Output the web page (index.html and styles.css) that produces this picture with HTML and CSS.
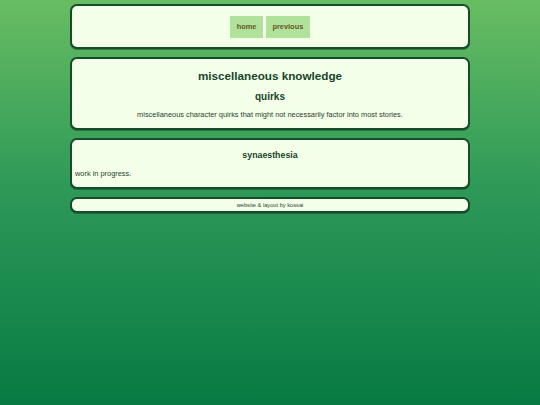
FILE: index.html
```html
<!DOCTYPE html>
<html>
<head>
<meta charset="utf-8">
<link rel="stylesheet" href="styles.css">
</head>
<body>
<div class="page">
  <div class="box nav">
    <a class="btn" href="#">home</a>
    <a class="btn" href="#">previous</a>
  </div>
  <div class="box intro">
    <h1>miscellaneous knowledge</h1>
    <h2>quirks</h2>
    <p>miscellaneous character quirks that might not necessarily factor into most stories.</p>
  </div>
  <div class="box section">
    <h3>synaesthesia</h3>
    <p>work in progress.</p>
  </div>
  <div class="box footer">website &amp; layout by kossai</div>
</div>
</body>
</html>
```
FILE: styles.css
```css
html, body {
  margin: 0;
  padding: 0;
  min-height: 100%;
}
body {
  background: linear-gradient(to bottom, #68bd62 0%, #2f9a58 45%, #077a43 100%);
  min-height: 405px;
  font-family: "Liberation Sans", Arial, sans-serif;
  color: #1f3f2c;
}
.page {
  width: 400px;
  margin: 0 auto;
  padding-top: 4px;
  display: flex;
  flex-direction: column;
  gap: 8px;
}
.box {
  background: #f4ffe9;
  border: 2px solid #184a2c;
  border-radius: 7px;
  box-sizing: border-box;
  box-shadow: 0 1px 0 rgba(20, 60, 35, 0.5);
}
.nav {
  height: 45px;
  display: flex;
  justify-content: center;
  align-items: center;
  gap: 3px;
}
.btn {
  background: #b0e29c;
  color: #6a5624;
  font-weight: bold;
  font-size: 7.4px;
  text-decoration: none;
  height: 22px;
  line-height: 22px;
  padding: 0 6.5px;
}
.intro {
  height: 73px;
  text-align: center;
  padding-top: 9px;
}
h1 {
  margin: 0;
  font-size: 11.7px;
  line-height: 15px;
  color: #17442b;
}
h2 {
  margin: 7px 0 0;
  font-size: 10px;
  line-height: 13px;
  color: #17442b;
}
.intro p {
  margin: 7px 0 0;
  font-size: 7.4px;
  line-height: 10px;
}
.section {
  height: 51px;
  padding: 9px 3px 0;
}
h3 {
  margin: 0;
  text-align: center;
  font-size: 8.8px;
  line-height: 12px;
  color: #17442b;
}
.section p {
  margin: 8px 0 0;
  font-size: 7.4px;
  line-height: 10px;
}
.footer {
  height: 16px;
  text-align: center;
  font-size: 5.7px;
  line-height: 12px;
}
```
